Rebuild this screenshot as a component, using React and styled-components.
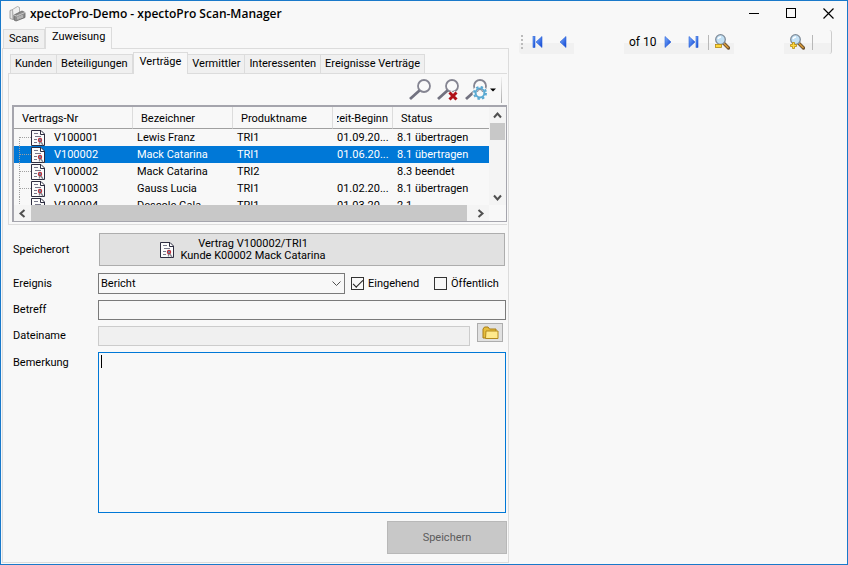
import React from "react";
import styled, { createGlobalStyle, css } from "styled-components";

const Global = createGlobalStyle`
  * { box-sizing: border-box; }
  body { margin: 0; background: #f8f8f8; }
  body, button, input, select, textarea {
    font-family: "Roboto", "Liberation Sans", sans-serif;
    font-size: 11px;
    line-height: 16px;
    color: #000;
  }
  button { padding: 0; border: 0; background: none; }
`;

const Window = styled.div`
  display: flex;
  flex-direction: column;
  min-height: 100vh;
  border: 1px solid #1979ca;
  background: #f8f8f8;
  overflow: hidden;
`;

const TitleBar = styled.header`
  display: flex;
  align-items: center;
  height: 25px;
  padding: 0 0 0 8px;
`;

const Title = styled.h1`
  flex: 1;
  margin: 0 0 0 4px;
  font: 600 12px/16px "Open Sans", "Noto Sans", sans-serif;
`;

const WindowButton = styled.button`
  width: 37px;
  height: 24px;
  display: grid;
  place-items: center;
`;

const Body = styled.div`
  display: flex;
  flex: 1;
`;

const LeftPane = styled.main`
  flex: 1;
  display: flex;
  flex-direction: column;
  min-width: 0;
`;

const Tabs = styled.div`
  display: flex;
  align-items: flex-end;
  height: 22px;
  padding-left: 2px;
`;

const Tab = styled.button`
  height: 19px;
  padding: 0 ${(p) => p.$pad || "4px"};
  border: 1px solid #dcdcdc;
  border-bottom: 0;
  border-left-width: ${(p) => (p.$joined ? "0" : "1px")};
  background: #f0f0f0;
  white-space: nowrap;
  ${(p) =>
    p.$active &&
    css`
      height: 22px;
      padding: 0 6px 4px;
      margin-bottom: -1px;
      border-left-width: 1px;
      background: #f8f8f8;
      position: relative;
    `}
`;

const OuterPage = styled.section`
  flex: 1;
  margin: 0 0 1px 1px;
  padding: 2px 1px 0 5px;
  border: 1px solid #dcdcdc;
`;

const ListPage = styled.section`
  padding: 0 0 2px 3px;
  border: 1px solid #dcdcdc;
  border-right: 0;
`;

const SearchBar = styled.div`
  display: flex;
  justify-content: flex-end;
  align-items: center;
  gap: 3px;
  height: 31px;
  padding-right: 5px;
`;

const IconButton = styled.button`
  display: inline-flex;
  align-items: center;
  justify-content: center;
  height: 24px;
`;

const EdgeLine = styled.span`
  width: 1px;
  height: 26px;
  margin-left: 1px;
  background: linear-gradient(#f0f0f0, #aaa);
`;

const ListBox = styled.div`
  display: grid;
  grid-template-columns: 1fr 17px;
  border: 2px solid #a5a5ad;
  border-width: 2px 1px 1px 2px;
`;

const Viewport = styled.div`
  height: 98px;
  overflow: hidden;
`;

const Table = styled.table`
  width: 100%;
  table-layout: fixed;
  border-collapse: separate;
  border-spacing: 0;
`;

const Col = styled.col`
  width: ${(p) => p.$width || "auto"};
`;

const Th = styled.th`
  height: 22px;
  padding: 2px 0 0 8px;
  border-bottom: 1px solid #a0a0a0;
  border-right: 1px solid #dcdcdc;
  font-weight: 400;
  text-align: left;
  white-space: nowrap;
  overflow: hidden;
  &:last-child { border-right: 0; }
`;

const ClippedLabel = styled.span`
  display: flex;
  justify-content: flex-end;
  margin: 0 4px 0 -4px;
  overflow: hidden;
`;

const Row = styled.tr`
  background: ${(p) => (p.$selected ? "#0078d7" : "transparent")};
  color: ${(p) => (p.$selected ? "#fff" : "#000")};
`;

const Td = styled.td`
  height: 17px;
  padding: 0 0 0 4px;
  white-space: nowrap;
  overflow: hidden;
  text-overflow: clip;
`;

const TreeCell = styled.div`
  display: flex;
  align-items: center;
  height: 17px;
`;

const TreeText = styled.span`
  margin-left: 9px;
`;

const ScrollTrack = styled.div`
  display: flex;
  flex-direction: ${(p) => (p.$vertical ? "column" : "row")};
  background: #f4f4f4;
`;

const ScrollButton = styled.button`
  display: grid;
  place-items: center;
  width: 17px;
  height: 16px;
  flex: none;
`;

const Thumb = styled.div`
  background: #c8c8c8;
  ${(p) =>
    p.$vertical
      ? css`
          height: 17px;
          margin: 0 1px auto;
        `
      : css`
          flex: 1;
          margin-right: 5px;
        `}
`;

const Form = styled.form`
  display: grid;
  grid-template-columns: 86px 1fr;
  row-gap: 6px;
  padding: 8px 1px 0 4px;
`;

const Label = styled.label`
  padding-left: 1px;
  align-self: ${(p) => (p.$top ? "start" : "center")};
  padding-top: ${(p) => (p.$top ? "3px" : "0")};
`;

const StorageButton = styled.button`
  display: flex;
  align-items: center;
  justify-content: center;
  gap: 6px;
  height: 33px;
  margin: 0 1px 1px;
  padding-right: 118px;
  border: 1px solid #adadad;
  background: #e1e1e1;
  line-height: 12px;
`;

const Line = styled.div`
  display: flex;
  align-items: center;
`;

const SelectWrap = styled.div`
  display: grid;
  flex: 1;
  align-items: center;
  & > * { grid-area: 1 / 1; }
  & > svg { justify-self: end; margin-right: 4px; pointer-events: none; }
`;

const Select = styled.select`
  appearance: none;
  width: 100%;
  height: 21px;
  padding: 0 2px;
  border: 1px solid #7a7a7a;
  border-radius: 0;
  background: #f8f8f8;
`;

const CheckLabel = styled.label`
  display: flex;
  align-items: center;
  gap: 4px;
  width: ${(p) => p.$width};
  margin-left: 6px;
  white-space: nowrap;
`;

const CheckBox = styled.input`
  appearance: none;
  flex: none;
  width: 13px;
  height: 13px;
  margin: 0;
  border: 1px solid #333;
  display: grid;
  place-items: center;
  &:checked::before {
    content: "";
    width: 9px;
    height: 4px;
    margin-top: -3px;
    border: solid #222;
    border-width: 0 0 1px 1px;
    transform: rotate(-45deg);
  }
`;

const TextInput = styled.input`
  flex: 1;
  min-width: 0;
  height: 20px;
  padding: 0 2px;
  border: 1px solid ${(p) => (p.disabled ? "#ccc" : "#7a7a7a")};
  background: ${(p) => (p.disabled ? "#f0f0f0" : "#f8f8f8")};
`;

const FolderButton = styled.button`
  display: grid;
  place-items: center;
  width: 26px;
  height: 19px;
  margin: -7px 3px 0 7px;
  border: 1px solid #adadad;
  background: #e1e1e1;
`;

const Memo = styled.textarea`
  display: block;
  width: 100%;
  height: 161px;
  padding: 1px 2px;
  border: 1px solid #0078d7;
  outline: 0;
  border-radius: 0;
  resize: none;
  caret-color: transparent;
  background: linear-gradient(#000, #000) 2px 2px / 1px 13px no-repeat #f8f8f8;
`;

const SaveButton = styled.button`
  grid-column: 2;
  justify-self: end;
  width: 120px;
  height: 33px;
  margin: 2px -1px 0 0;
  border: 1px solid #b8b8b8;
  background: #c8c8c8;
  color: #5c5c5c;
`;

const RightPane = styled.aside`
  width: 338px;
  padding: 4px 15px 0 10px;
`;

const PagerBar = styled.nav`
  display: flex;
  align-items: center;
  height: 24px;
  border-right: 1px solid #ccc;
  border-radius: 3px;
  background: linear-gradient(#f8f8f8 55%, #f1f1f1 55%);
`;

const Grip = styled.span`
  width: 2px;
  height: 14px;
  margin: 0 3px 0 2px;
  background: repeating-linear-gradient(#bbb 0 2px, transparent 2px 4px);
`;

const PagerButton = styled.button`
  display: grid;
  place-items: center;
  width: ${(p) => p.$width || "24px"};
  height: 20px;
`;

const PageInput = styled.input`
  width: 50px;
  height: 24px;
  margin: ${(p) => p.$margin || "0"};
  padding: 0 4px;
  border: 0;
  background: #f8f8f8;
`;

const PageCount = styled.span`
  width: 33px;
  padding-left: 5px;
  font-size: 12px;
  white-space: nowrap;
`;

const Separator = styled.span`
  width: 1px;
  height: 15px;
  margin: 0 5px 0 ${(p) => p.$before};
  background: #b8b8b8;
`;

const AppIcon = () => (
  <svg width="17" height="16" viewBox="0 0 17 16">
    <path d="M1 4.500l3-1v10l-3-1z" fill="#e4e4e4" stroke="#909090" strokeWidth=".8" />
    <path d="M3.500 3.500l5-3 2 1v8l-6 4z" fill="#f0f0f0" stroke="#a0a0a0" strokeWidth=".8" />
    <path d="M5 9l8-4 3 1.500v5l-9 3.500-2-1z" fill="#8c8c8c" stroke="#666" strokeWidth=".8" />
    <path d="M5 9l2.500 1L16 6.500" fill="none" stroke="#c8c8c8" />
    <path d="M9 10.500v3M11 9.700v3M13 9v3" stroke="#d8d8d8" />
  </svg>
);

const DocIcon = () => (
  <svg width="14" height="16" viewBox="0 0 14 16">
    <path d="M.5.5h9.500l3.500 3.500v11.500H.5z" fill="#fbfbfb" stroke="#2d2d40" />
    <path d="M9.500.5v4h4" fill="none" stroke="#2d2d40" />
    <path d="M3 3.500h4M4 6.500h6M3 9.500h3M3 12.500h3" stroke="#77778a" />
    <path d="M8.500 11.500v3M9.500 11.500l2.500 3.500" stroke="#85858f" strokeWidth="1.300" />
    <circle cx="9" cy="10" r="1.600" fill="#4aa0c0" stroke="#c22f3c" strokeWidth="1.200" />
  </svg>
);

const TreeLines = ({ first }) => (
  <svg width="13" height="17" viewBox="0 0 13 17">
    <path d={first ? "M1.500 8v9M2 8.500h11" : "M1.500 0v17M2 8.500h11"} fill="none" stroke="#a0a0a0" strokeDasharray="1 1" />
  </svg>
);

const Lens = ({ badge }) => (
  <svg width={badge === "gear" ? 33 : 25} height="24" viewBox={badge === "gear" ? "0 0 33 24" : "0 0 25 24"}>
    <circle cx="16" cy="8" r="6" fill="#fafafa" stroke="#858592" strokeWidth="1.800" />
    <path d="M11.500 12.500L2 21" stroke="#727280" strokeWidth="2.800" />
    {badge === "x" && <path d="M13.500 14.500l7 7M20.500 14.500l-7 7" stroke="#f8f8f8" strokeWidth="5" />}
    {badge === "x" && <path d="M13.500 14.500l7 7M20.500 14.500l-7 7" stroke="#b01018" strokeWidth="3" />}
    {badge === "gear" && (
      <>
        <circle cx="16" cy="15" r="7.500" fill="#f8f8f8" />
        <circle cx="16" cy="15" r="6" fill="none" stroke="#5aa9d2" strokeWidth="2" strokeDasharray="2.400 2.312" />
        <circle cx="16" cy="15" r="4.400" fill="#f8f8f8" stroke="#5aa9d2" strokeWidth="2" />
        <path d="M13.500 14a2.500 2.500 0 0 1 5 0" fill="none" stroke="#858592" />
        <path d="M26 10.500h6l-3 3z" fill="#000" />
      </>
    )}
  </svg>
);

const Chevron = ({ d, stroke = 2 }) => (
  <svg width="9" height="9" viewBox="0 0 9 9">
    <path d={d} fill="none" stroke="#505050" strokeWidth={stroke} />
  </svg>
);

const FolderIcon = () => (
  <svg width="17" height="14" viewBox="0 0 17 14">
    <path d="M1 12V3l1.500-2H6l1.500 2H14v9z" fill="#e6bd3c" stroke="#a77d16" />
    <path d="M4 5h12v7.500H3.500z" fill="#ffe98c" stroke="#b48a1c" />
  </svg>
);

const PageArrow = ({ dir, bar }) => {
  const id = `arrow-${dir}-${bar ? "end" : "step"}`;
  return (
    <svg width="12" height="12" viewBox="0 0 12 12">
      <defs>
        <linearGradient id={id} x1="0" y1="0" x2="1" y2="1">
          <stop offset="0" stopColor="#7fb2ff" />
          <stop offset="1" stopColor="#0a3fd0" />
        </linearGradient>
      </defs>
      <g fill={`url(#${id})`} stroke="#2a62d8" strokeWidth=".6">
        {dir === "left" ? <path d="M10 .5v11L4 6z" /> : <path d="M2 .5v11L8 6z" />}
        {bar && <rect x={dir === "left" ? 1 : 9} y=".5" width="2" height="11" />}
      </g>
    </svg>
  );
};

const ZoomIcon = ({ plus }) => (
  <svg width="16" height="16" viewBox="0 0 16 16">
    <path d="M9.500 9l5 5" stroke="#6e5432" strokeWidth="3.400" strokeLinecap="round" />
    <path d="M10 9.500l4 4" stroke="#d89a38" strokeWidth="1.600" strokeLinecap="round" />
    <circle cx="6.500" cy="5.500" r="4.800" fill="#c3e1f5" stroke="#7f8b98" strokeWidth="1.300" />
    <path d="M4 5a3 3 0 0 1 3-2" fill="none" stroke="#fff" strokeWidth="1.500" />
    {plus ? (
      <path d="M3.500 8.500h2v2h2v2h-2v2h-2v-2h-2v-2h2z" fill="#ffd83c" stroke="#b58a10" strokeWidth=".8" />
    ) : (
      <rect x="1.500" y="10.500" width="6" height="3" fill="#ffd83c" stroke="#b58a10" strokeWidth=".8" />
    )}
  </svg>
);

const listTabs = ["Kunden", "Beteiligungen", "Verträge", "Vermittler", "Interessenten", "Ereignisse Verträge"];

const contracts = [
  ["V100001", "Lewis Franz", "TRI1", "01.09.20...", "8.1 übertragen"],
  ["V100002", "Mack Catarina", "TRI1", "01.06.20...", "8.1 übertragen"],
  ["V100002", "Mack Catarina", "TRI2", "", "8.3 beendet"],
  ["V100003", "Gauss Lucia", "TRI1", "01.02.20...", "8.1 übertragen"],
  ["V100004", "Descole Gala", "TRI1", "01.03.20...", "2.1"],
];

export default function App() {
  return (
    <>
      <Global />
      <Window>
        <TitleBar>
          <AppIcon />
          <Title>xpectoPro-Demo - xpectoPro Scan-Manager</Title>
          <WindowButton aria-label="Minimieren">
            <svg width="11" height="11"><path d="M0 5.500h10" stroke="#000" /></svg>
          </WindowButton>
          <WindowButton aria-label="Maximieren">
            <svg width="11" height="11"><rect x=".5" y=".5" width="9" height="9" fill="none" stroke="#000" /></svg>
          </WindowButton>
          <WindowButton aria-label="Schließen">
            <svg width="11" height="11"><path d="M.5.5l10 10M10.500.5l-10 10" stroke="#000" strokeWidth="1.200" /></svg>
          </WindowButton>
        </TitleBar>
        <Body>
          <LeftPane>
            <Tabs>
              <Tab $pad="5px">Scans</Tab>
              <Tab $active $joined>Zuweisung</Tab>
            </Tabs>
            <OuterPage>
              <Tabs>
                {listTabs.map((t, i) => (
                  <Tab key={t} $active={t === "Verträge"} $joined={i > 0}>{t}</Tab>
                ))}
              </Tabs>
              <ListPage>
                <SearchBar>
                  <IconButton aria-label="Suchen"><Lens /></IconButton>
                  <IconButton aria-label="Suche löschen"><Lens badge="x" /></IconButton>
                  <IconButton aria-label="Suchoptionen"><Lens badge="gear" /></IconButton>
                  <EdgeLine />
                </SearchBar>
                <ListBox>
                  <Viewport>
                    <Table>
                      <colgroup>
                        <Col $width="119px" />
                        <Col $width="100px" />
                        <Col $width="100px" />
                        <Col $width="60px" />
                        <Col />
                      </colgroup>
                      <thead>
                        <tr>
                          <Th>Vertrags-Nr</Th>
                          <Th>Bezeichner</Th>
                          <Th>Produktname</Th>
                          <Th><ClippedLabel>zeit-Beginn</ClippedLabel></Th>
                          <Th>Status</Th>
                        </tr>
                      </thead>
                      <tbody>
                        {contracts.map(([nr, ...rest], i) => (
                          <Row key={i} $selected={i === 1}>
                            <Td>
                              <TreeCell>
                                <TreeLines first={i === 0} />
                                <DocIcon />
                                <TreeText>{nr}</TreeText>
                              </TreeCell>
                            </Td>
                            {rest.map((v, j) => <Td key={j}>{v}</Td>)}
                          </Row>
                        ))}
                      </tbody>
                    </Table>
                  </Viewport>
                  <ScrollTrack $vertical>
                    <ScrollButton aria-label="Nach oben"><Chevron d="M1 6.500l3.500-4 3.500 4" /></ScrollButton>
                    <Thumb $vertical />
                    <ScrollButton aria-label="Nach unten"><Chevron d="M1 2.500l3.500 4 3.500-4" /></ScrollButton>
                  </ScrollTrack>
                  <ScrollTrack>
                    <ScrollButton aria-label="Nach links"><Chevron d="M6.500 1l-4 3.500 4 3.500" /></ScrollButton>
                    <Thumb />
                    <ScrollButton aria-label="Nach rechts"><Chevron d="M2.500 1l4 3.500-4 3.500" /></ScrollButton>
                  </ScrollTrack>
                </ListBox>
              </ListPage>
              <Form onSubmit={(e) => e.preventDefault()}>
                <Label htmlFor="storage">Speicherort</Label>
                <StorageButton id="storage" type="button">
                  <DocIcon />
                  <span>Vertrag V100002/TRI1<br />Kunde K00002 Mack Catarina</span>
                </StorageButton>
                <Label htmlFor="event">Ereignis</Label>
                <Line>
                  <SelectWrap>
                    <Select id="event" defaultValue="Bericht"><option>Bericht</option></Select>
                    <Chevron d="M.5 2.500l4 4 4-4" stroke={1} />
                  </SelectWrap>
                  <CheckLabel $width="77px"><CheckBox type="checkbox" defaultChecked />Eingehend</CheckLabel>
                  <CheckLabel $width="72px"><CheckBox type="checkbox" />Öffentlich</CheckLabel>
                </Line>
                <Label htmlFor="subject">Betreff</Label>
                <Line><TextInput id="subject" /></Line>
                <Label htmlFor="file">Dateiname</Label>
                <Line>
                  <TextInput id="file" disabled />
                  <FolderButton type="button" aria-label="Datei wählen"><FolderIcon /></FolderButton>
                </Line>
                <Label htmlFor="note" $top>Bemerkung</Label>
                <Memo id="note" />
                <SaveButton disabled>Speichern</SaveButton>
              </Form>
            </OuterPage>
          </LeftPane>
          <RightPane>
            <PagerBar>
              <Grip />
              <PagerButton aria-label="Erste Seite"><PageArrow dir="left" bar /></PagerButton>
              <PagerButton aria-label="Vorige Seite"><PageArrow dir="left" /></PagerButton>
              <PageInput aria-label="Seite" />
              <PageCount>of 10</PageCount>
              <PagerButton aria-label="Nächste Seite"><PageArrow dir="right" /></PagerButton>
              <PagerButton aria-label="Letzte Seite"><PageArrow dir="right" bar /></PagerButton>
              <Separator $before="3px" />
              <PagerButton $width="16px" aria-label="Verkleinern"><ZoomIcon /></PagerButton>
              <PageInput $margin="0 5px 0 4px" aria-label="Zoom" />
              <PagerButton $width="16px" aria-label="Vergrößern"><ZoomIcon plus /></PagerButton>
              <Separator $before="7px" />
            </PagerBar>
          </RightPane>
        </Body>
      </Window>
    </>
  );
}
